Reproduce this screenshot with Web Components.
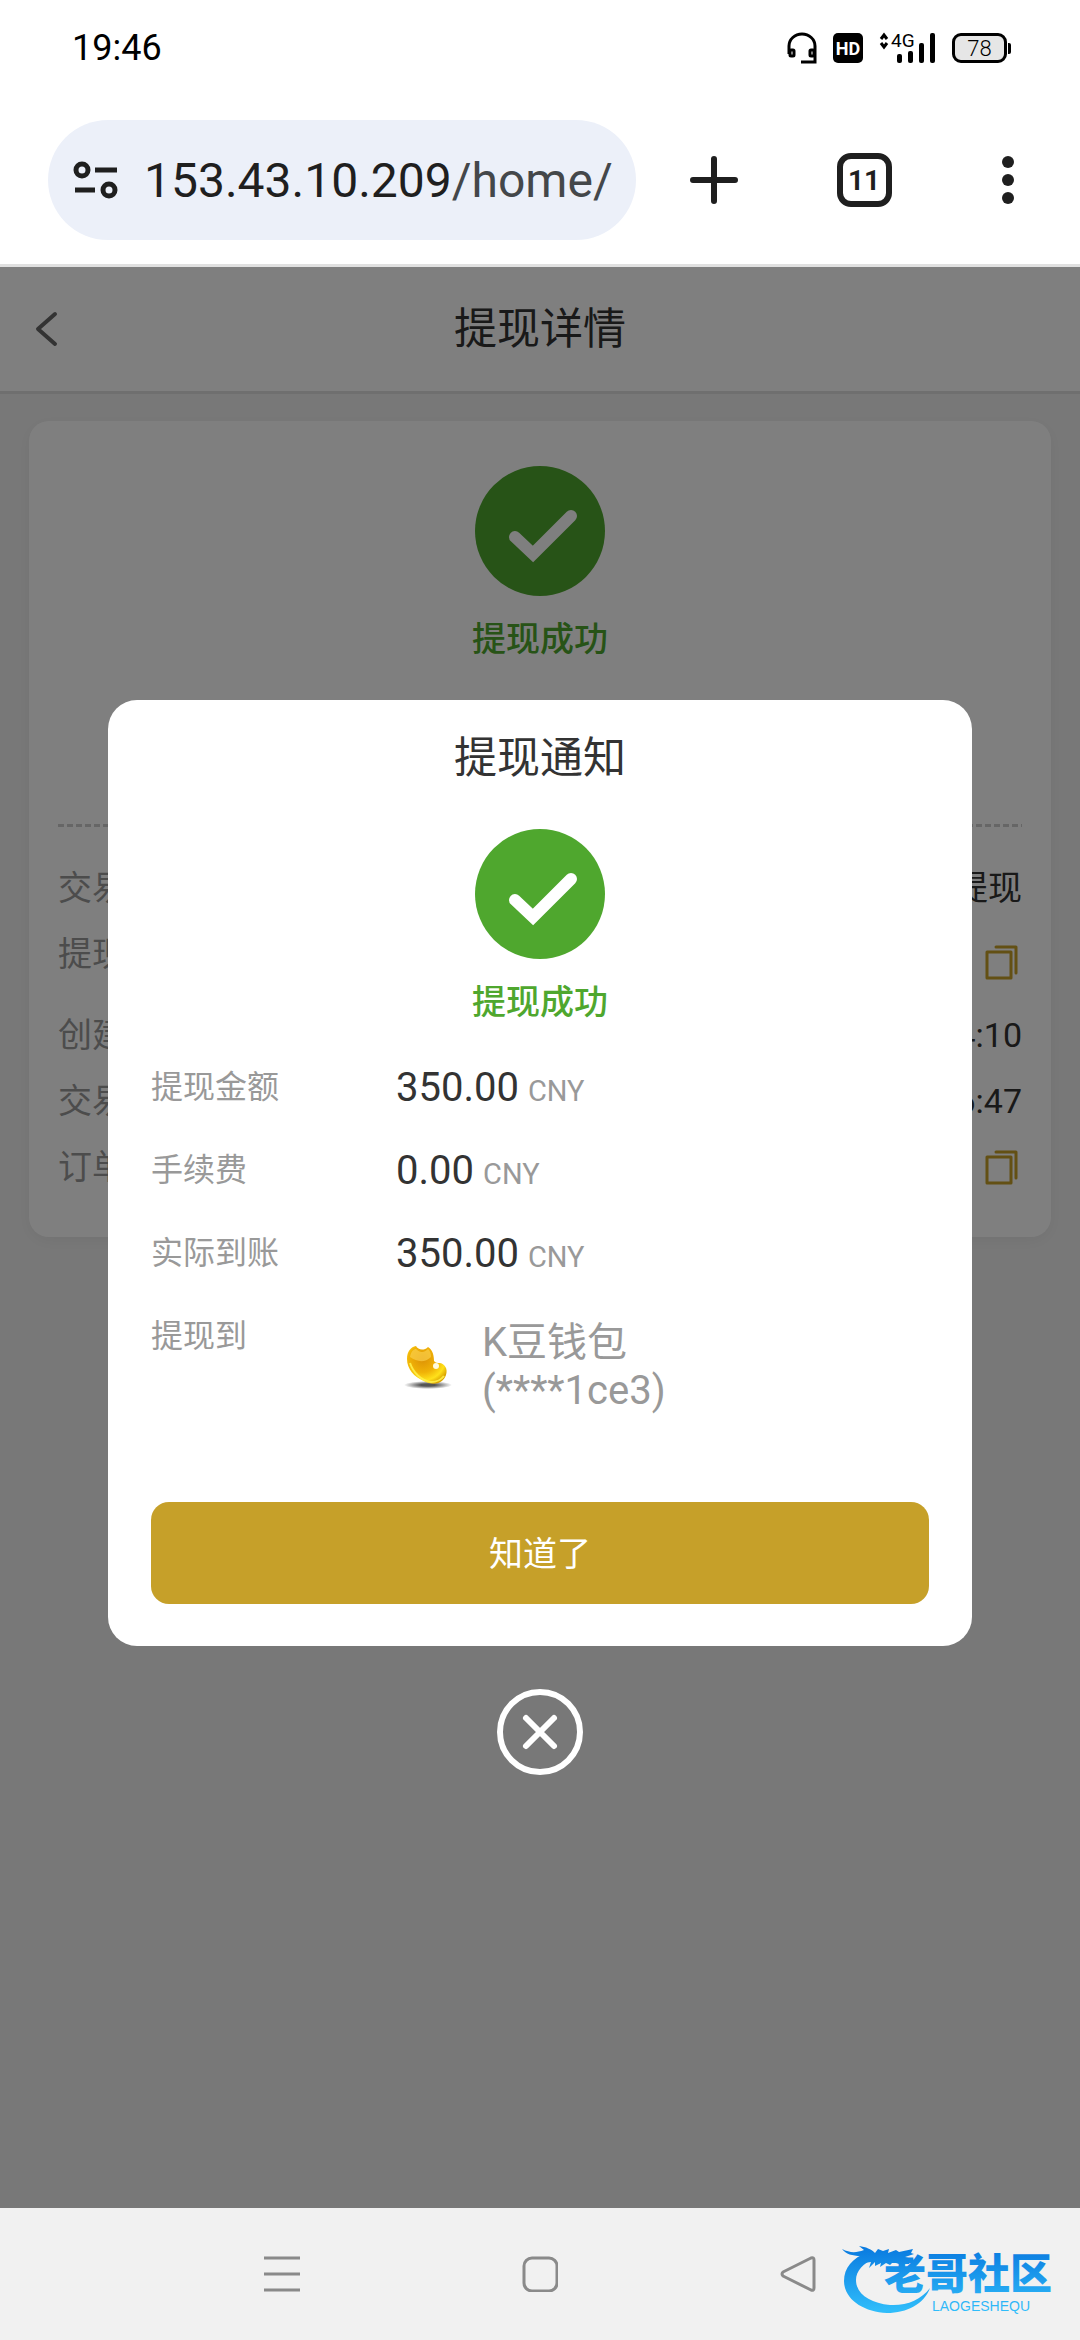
<!DOCTYPE html>
<html lang="zh-CN">
<head>
<meta charset="utf-8">
<meta name="viewport" content="width=device-width, initial-scale=1">
<title>提现详情</title>
<style>
  body {
    margin: 0;
    font-family: Roboto, "Noto Sans CJK SC", sans-serif;
  }
</style>
</head>
<body>
<app-shell>
  <status-bar slot="status" time="19:46" battery="78"></status-bar>
  <browser-bar slot="browser" host="153.43.10.209" path="/home/" tabs="11"></browser-bar>
  <page-header>提现详情</page-header>
  <detail-card>
    <success-mark>提现成功</success-mark>
    <detail-row slot="rows" label="交易">提现</detail-row>
    <detail-row slot="rows" label="提现" copy tall></detail-row>
    <detail-row slot="rows" label="创建">4:10</detail-row>
    <detail-row slot="rows" label="交易">6:47</detail-row>
    <detail-row slot="rows" label="订单" copy></detail-row>
  </detail-card>
  <notice-dialog slot="overlay" heading="提现通知" action="知道了">
    <success-mark>提现成功</success-mark>
    <notice-row slot="rows" label="提现金额"><money-amount value="350.00" currency="CNY"></money-amount></notice-row>
    <notice-row slot="rows" label="手续费"><money-amount value="0.00" currency="CNY"></money-amount></notice-row>
    <notice-row slot="rows" label="实际到账"><money-amount value="350.00" currency="CNY"></money-amount></notice-row>
    <notice-row slot="rows" label="提现到"><wallet-target name="K豆钱包" account="(****1ce3)"></wallet-target></notice-row>
  </notice-dialog>
  <system-nav slot="nav"></system-nav>
</app-shell>

<script>
class BaseElement extends HTMLElement {
  constructor() {
    super();
    this.attachShadow({ mode: "open" });
  }

  connectedCallback() {
    this.shadowRoot.innerHTML = `<style>
      :host, * { box-sizing: border-box; }
      button { margin: 0; padding: 0; border: 0; background: none; color: inherit; font: inherit; }
      svg { display: block; }
      ${this.constructor.styles}
    </style>${this.render()}`;
  }

  attr(name) {
    return this.getAttribute(name) || "";
  }
}

class AppShell extends BaseElement {
  static get styles() {
    return /* css */`
      :host {
        display: flex;
        flex-direction: column;
        min-height: 100vh;
        background: #f1f1f1;
      }

      main {
        position: relative;
        flex: 1;
        background: #f1f1f1;
      }
    `;
  }

  render() {
    return /* html */`
      <slot name="status"></slot>
      <slot name="browser"></slot>
      <main>
        <slot></slot>
        <slot name="overlay"></slot>
      </main>
      <slot name="nav"></slot>`;
  }
}

class StatusBar extends BaseElement {
  static get styles() {
    return /* css */`
      :host {
        display: flex;
        justify-content: space-between;
        align-items: center;
        height: 96px;
        padding: 0 69px 0 72px;
        background: #fff;
        color: #000;
        font-size: 36px;
      }

      .icons {
        display: flex;
        align-items: center;
        gap: 16px;
      }

      .battery {
        display: flex;
        align-items: center;
      }

      .level {
        display: flex;
        justify-content: center;
        align-items: center;
        width: 55px;
        height: 30px;
        border: 3px solid #000;
        border-radius: 9px;
        background: #e6e6e6;
        font-size: 22px;
        font-weight: 300;
      }

      .cap {
        width: 3px;
        height: 11px;
        margin-left: 1px;
        border-radius: 0 2px 2px 0;
        background: #000;
      }
    `;
  }

  render() {
    return /* html */`
      <time>${this.attr("time")}</time>
      <div class="icons">
        <svg width="30" height="32" viewBox="0 0 30 32" fill="none" stroke="#000" stroke-width="3">
          <path d="M2 22V14a13 12 0 0 1 26 0v16H14"/>
          <rect x="3" y="18" width="4" height="6" rx="1"/>
          <rect x="23" y="18" width="4" height="6" rx="1"/>
        </svg>
        <svg width="30" height="30" viewBox="0 0 30 30">
          <rect width="30" height="30" rx="5"/>
          <text x="15" y="22" text-anchor="middle" font-size="18" font-weight="700" fill="#fff">HD</text>
        </svg>
        <svg width="57" height="44" viewBox="0 -7 57 44">
          <path d="M2 6l3-4 3 4M2 10l3 4 3-4" fill="none" stroke="#000" stroke-width="3"/>
          <text x="12" y="14" font-size="19">4G</text>
          <rect x="18" y="21" width="5" height="9" rx="2"/>
          <rect x="29" y="18" width="5" height="12" rx="2"/>
          <rect x="40" y="10" width="5" height="20" rx="2"/>
          <rect x="51" y="0" width="5" height="30" rx="2"/>
        </svg>
        <div class="battery"><span class="level">${this.attr("battery")}</span><span class="cap"></span></div>
      </div>`;
  }
}

class BrowserBar extends BaseElement {
  static get styles() {
    return /* css */`
      :host {
        display: grid;
        grid-template-columns: 1fr 156px 144px 144px;
        align-items: center;
        padding: 24px 0 24px 48px;
        border-bottom: 3px solid #e0e0e0;
        background: #fff;
        color: #1f1f1f;
      }

      .address {
        display: flex;
        align-items: center;
        gap: 24px;
        height: 120px;
        padding: 0 24px;
        border-radius: 60px;
        background: #ecf0f9;
        font-size: 48px;
        white-space: nowrap;
        overflow: hidden;
      }

      .address svg { flex: none; }

      .path { color: #44474a; }

      button {
        display: flex;
        justify-content: center;
        align-items: center;
        height: 120px;
      }

      .count {
        display: flex;
        justify-content: center;
        align-items: center;
        width: 55px;
        height: 54px;
        border: 6px solid #1f1f1f;
        border-radius: 14px;
        font-size: 28px;
        font-weight: 700;
      }
    `;
  }

  render() {
    return /* html */`
      <div class="address">
        <svg width="48" height="40" viewBox="0 0 48 40" fill="none" stroke="#1f1f1f" stroke-width="5">
          <circle cx="10" cy="10" r="6"/>
          <path d="M23 10h22M3 30h20"/>
          <circle cx="37" cy="30" r="6"/>
        </svg>
        <span>${this.attr("host")}<span class="path">${this.attr("path")}</span></span>
      </div>
      <button aria-label="新标签页">
        <svg width="48" height="48" viewBox="0 0 48 48" stroke="#1f1f1f" stroke-width="6" stroke-linecap="round"><path d="M24 3v42M3 24h42"/></svg>
      </button>
      <button aria-label="标签页"><span class="count">${this.attr("tabs")}</span></button>
      <button aria-label="更多">
        <svg width="12" height="48" viewBox="0 0 12 48" fill="#1f1f1f"><circle cx="6" cy="6" r="6"/><circle cx="6" cy="24" r="6"/><circle cx="6" cy="42" r="6"/></svg>
      </button>`;
  }
}

class PageHeader extends BaseElement {
  static get styles() {
    return /* css */`
      :host {
        display: grid;
        grid-template-columns: 96px 1fr 96px;
        align-items: center;
        height: 127px;
        border-bottom: 3px solid #dedede;
        background: #fff;
        color: #333;
      }

      button {
        display: flex;
        align-items: center;
        height: 120px;
        padding-left: 35px;
      }

      h1 {
        margin: 0;
        font-size: 43px;
        font-weight: 400;
        line-height: 60px;
        text-align: center;
      }
    `;
  }

  render() {
    return /* html */`
      <button aria-label="返回">
        <svg width="24" height="36" viewBox="0 0 24 36" fill="none" stroke="#666" stroke-width="4" stroke-linecap="round" stroke-linejoin="round"><path d="M20 3L3 18l17 15"/></svg>
      </button>
      <h1><slot></slot></h1>`;
  }
}

class SuccessMark extends BaseElement {
  static get styles() {
    return /* css */`
      :host {
        display: flex;
        flex-direction: column;
        align-items: center;
        gap: 19px;
        color: #4fa72e;
        font-size: 34px;
        font-weight: 500;
        line-height: 48px;
      }
    `;
  }

  render() {
    return /* html */`
      <svg width="130" height="130" viewBox="0 0 130 130">
        <circle cx="65" cy="65" r="65" fill="#4fa72e"/>
        <path d="M40 71l18 17 38-38" fill="none" stroke="#fff" stroke-width="12" stroke-linecap="round"/>
      </svg>
      <span><slot></slot></span>`;
  }
}

class DetailCard extends BaseElement {
  static get styles() {
    return /* css */`
      :host {
        display: block;
        margin: 27px 29px;
        padding: 45px 29px 37px;
        border-radius: 20px;
        background: #fff;
        box-shadow: 0 4px 16px #0000000d;
      }

      .divider {
        height: 3px;
        margin: 161px 0 28px;
        background: repeating-linear-gradient(90deg, #ccc 0 6px, #0000 6px 9px);
      }
    `;
  }

  render() {
    return /* html */`
      <slot></slot>
      <div class="divider"></div>
      <slot name="rows"></slot>`;
  }
}

class DetailRow extends BaseElement {
  static get styles() {
    return /* css */`
      :host {
        display: flex;
        justify-content: space-between;
        height: 66px;
        font-size: 34px;
        line-height: 66px;
        color: #333;
      }

      :host([tall]) { height: 81px; }

      .label { color: #999; }

      .value {
        display: flex;
        align-items: center;
      }

      button { padding: 0 4px; }
    `;
  }

  render() {
    const copy = /* html */`
      <button aria-label="复制">
        <svg width="34" height="36" viewBox="0 0 34 36" fill="none" stroke="#c6a029" stroke-width="3" stroke-linejoin="round" stroke-linecap="round"><rect x="3" y="8" width="24" height="26"/><path d="M12 3h20v26"/></svg>
      </button>`;
    return /* html */`
      <span class="label">${this.attr("label")}</span>
      <span class="value"><slot></slot>${this.hasAttribute("copy") ? copy : ""}</span>`;
  }
}

class NoticeDialog extends BaseElement {
  static get styles() {
    return /* css */`
      :host {
        position: absolute;
        inset: 0;
        display: flex;
        flex-direction: column;
        justify-content: center;
        align-items: center;
        gap: 43px;
        background: #00000080;
      }

      section {
        width: 80%;
        padding: 28px 43px 42px;
        border-radius: 29px;
        background: #fff;
      }

      h2 {
        margin: 0 0 41px;
        color: #333;
        font-size: 43px;
        font-weight: 400;
        line-height: 60px;
        text-align: center;
      }

      .rows { margin: 20px 0 87px; }

      .confirm {
        display: block;
        width: 100%;
        height: 102px;
        padding-bottom: 4px;
        border-radius: 18px;
        background: #c6a029;
        color: #fff;
        font-size: 34px;
      }
    `;
  }

  render() {
    return /* html */`
      <section role="dialog" aria-label="${this.attr("heading")}">
        <h2>${this.attr("heading")}</h2>
        <slot></slot>
        <div class="rows"><slot name="rows"></slot></div>
        <button class="confirm">${this.attr("action")}</button>
      </section>
      <button aria-label="关闭">
        <svg width="86" height="86" viewBox="0 0 86 86" fill="none" stroke="#fff" stroke-width="6" stroke-linecap="round"><circle cx="43" cy="43" r="40"/><path d="M29 29l28 28M57 29L29 57"/></svg>
      </button>`;
  }
}

class NoticeRow extends BaseElement {
  static get styles() {
    return /* css */`
      :host {
        display: grid;
        grid-template-columns: 245px 1fr;
        min-height: 83px;
        color: #999;
        font-size: 32px;
        line-height: 83px;
      }
    `;
  }

  render() {
    return /* html */`<span>${this.attr("label")}</span><slot></slot>`;
  }
}

class MoneyAmount extends BaseElement {
  static get styles() {
    return /* css */`
      :host {
        display: flex;
        align-items: baseline;
        gap: 9px;
      }

      .value {
        color: #333;
        font-size: 40px;
      }

      .currency {
        font-size: 29px;
        line-height: 40px;
      }
    `;
  }

  render() {
    return /* html */`<span class="value">${this.attr("value")}</span><span class="currency">${this.attr("currency")}</span>`;
  }
}

class WalletTarget extends BaseElement {
  static get styles() {
    return /* css */`
      :host {
        display: flex;
        align-items: center;
        gap: 26px;
        padding-top: 24px;
        font-size: 40px;
        line-height: 48px;
      }

      .text {
        display: flex;
        flex-direction: column;
      }
    `;
  }

  render() {
    return /* html */`
      <svg width="60" height="60" viewBox="0 0 60 60">
        <defs>
          <radialGradient id="bean" cx="0.4" cy="0.35" r="0.7">
            <stop offset="0" stop-color="#dd9206"/>
            <stop offset="0.5" stop-color="#f0b207"/>
            <stop offset="0.8" stop-color="#ffe11a"/>
            <stop offset="1" stop-color="#dba400"/>
          </radialGradient>
          <radialGradient id="shade">
            <stop offset="0.3" stop-color="#555"/>
            <stop offset="1" stop-color="#555" stop-opacity="0"/>
          </radialGradient>
        </defs>
        <ellipse cx="32" cy="48" rx="24" ry="4" fill="url(#shade)"/>
        <path d="M11 22C11 14 15 10 20 9c2 4 8 5 12 1 5 3 6 9 6 14 2 2 3 2 6 2 5 1 8 6 6 12-3 9-13 11-22 6C18 40 11 32 11 22z" fill="url(#bean)"/>
        <path d="M14 20c1-6 4-8 6-8 4 4 8 4 12 0 3 3 3 6 3 8-6 6-14 5-21 0z" fill="#f9cf4a" opacity="0.7"/>
        <path d="M14 26c3 9 11 18 21 19 6 0 10-2 13-6" fill="none" stroke="#fff04a" stroke-width="2" opacity="0.9"/>
        <circle cx="40" cy="29" r="3" fill="#fffbe0"/>
      </svg>
      <span class="text"><span>${this.attr("name")}</span><span>${this.attr("account")}</span></span>`;
  }
}

class SystemNav extends BaseElement {
  static get styles() {
    return /* css */`
      :host {
        position: relative;
        display: flex;
        justify-content: center;
        height: 132px;
        background: #f1f1f1;
      }

      button {
        display: flex;
        justify-content: center;
        align-items: center;
        width: 258px;
      }

      /* community mark floats over the right end of the bar */
      site-mark {
        position: absolute;
        right: 16px;
        bottom: 24px;
      }
    `;
  }

  render() {
    return /* html */`
      <button aria-label="最近任务">
        <svg width="36" height="36" viewBox="0 0 36 36" stroke="#8a8a8a" stroke-width="3"><path d="M0 2h36M0 18h36M0 34h36"/></svg>
      </button>
      <button aria-label="主屏幕">
        <svg width="36" height="36" viewBox="0 0 36 36" fill="none" stroke="#8a8a8a" stroke-width="3"><rect x="2" y="2" width="33" height="33" rx="8"/></svg>
      </button>
      <button aria-label="返回">
        <svg width="36" height="36" viewBox="0 0 36 36" fill="none" stroke="#8a8a8a" stroke-width="3" stroke-linejoin="round"><path d="M31 2L3 16q-2 2 0 4l28 14q3 1 3-2V4q0-3-3-2z"/></svg>
      </button>
      <site-mark></site-mark>`;
  }
}

class SiteMark extends BaseElement {
  static get styles() {
    return /* css */`
      :host { display: block; }
    `;
  }

  render() {
    return /* html */`
      <svg width="224" height="76" viewBox="0 0 224 76">
        <defs>
          <linearGradient id="sky" gradientUnits="userSpaceOnUse" x1="0" y1="8" x2="0" y2="70">
            <stop offset="0" stop-color="#0a7be0"/>
            <stop offset="1" stop-color="#2fbcfa"/>
          </linearGradient>
        </defs>
        <g fill="url(#sky)">
          <path d="M28 12C12 18 4 28 4 41c0 18 19 31 43 32 20 0 37-9 43-25-9 12-24 18-40 17C30 63 16 54 16 40c0-9 7-17 20-22z"/>
          <path d="M2 9c8 4 14 4 22 1l-5-4c7 1 12 3 16 7l3-4 5 2 6-2-1 4 8-3 3 2 14-3-2 4 3 1-9 3 7 2-8 2 7 0-2 3-10 0-6-2-3 3-4-2-6 4 1-4-6 3 0-4-6 6 2-6-7 1 3-4-6-3C12 16 6 14 2 9z"/>
          <text x="44" y="49" font-family="'Noto Sans CJK SC', sans-serif" font-size="42" font-weight="900">老哥社区</text>
          <text x="92" y="71" font-family="'Liberation Sans', sans-serif" font-size="14">LAOGESHEQU</text>
        </g>
      </svg>`;
  }
}

customElements.define("app-shell", AppShell);
customElements.define("status-bar", StatusBar);
customElements.define("browser-bar", BrowserBar);
customElements.define("page-header", PageHeader);
customElements.define("success-mark", SuccessMark);
customElements.define("detail-card", DetailCard);
customElements.define("detail-row", DetailRow);
customElements.define("notice-dialog", NoticeDialog);
customElements.define("notice-row", NoticeRow);
customElements.define("money-amount", MoneyAmount);
customElements.define("wallet-target", WalletTarget);
customElements.define("site-mark", SiteMark);
customElements.define("system-nav", SystemNav);
</script>
</body>
</html>
